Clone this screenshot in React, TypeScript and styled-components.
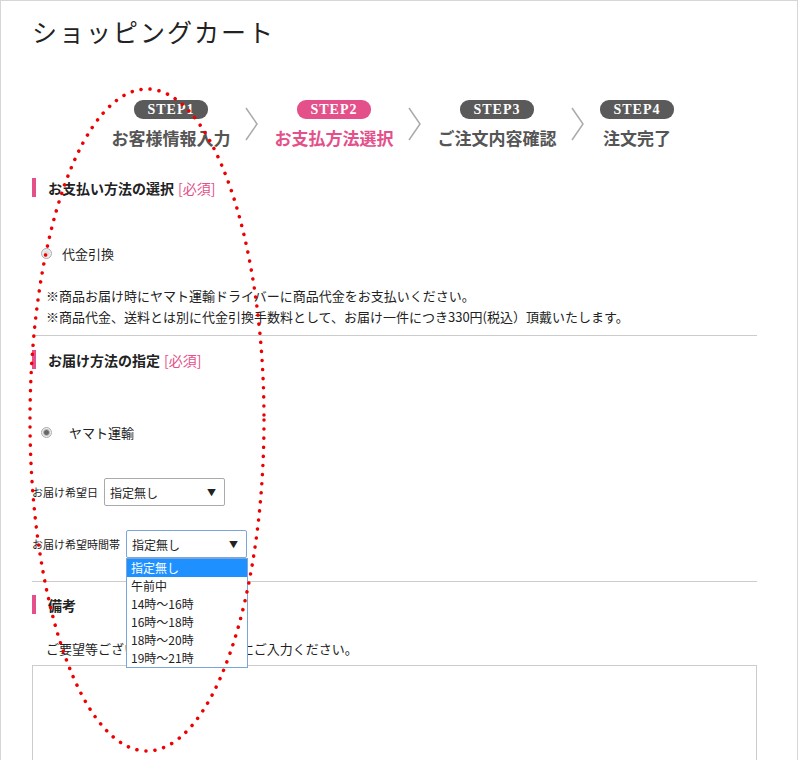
import React from "react";
import styled, { createGlobalStyle } from "styled-components";

const G = createGlobalStyle`
  html, body { margin: 0; padding: 0; background: #fff; }
  body { font-family: "Liberation Serif", "Noto Sans CJK JP", serif; color: #222; }
`;
const Frame = styled.div`
  position: relative; width: 798px; height: 760px; border: 1px solid #d6d6d6; border-bottom: none;
  box-sizing: border-box; overflow: hidden; padding: 0 42px 0 31px;
`;
const Title = styled.h1`
  margin: 17px 0 0; font-weight: 400; font-size: 25px; letter-spacing: 2px; line-height: 32px;
`;
const Steps = styled.div`
  display: flex; align-items: flex-start; margin: 50px 0 0 76px;
`;
const Step = styled.div<{ $w: number }>`
  width: ${p => p.$w}px; display: flex; flex-direction: column; align-items: center; gap: 7px;
`;
const Badge = styled.div<{ $on?: boolean }>`
  background: ${p => (p.$on ? "#e4508a" : "#5a5a5a")}; color: #fff; font-weight: 700; font-size: 14px;
  border-radius: 9px; width: 74px; height: 19px; line-height: 19px; text-align: center; letter-spacing: 1px;
`;
const StepLabel = styled.div<{ $on?: boolean }>`
  font-size: 17px; font-weight: 700; color: ${p => (p.$on ? "#e4508a" : "#555")};
  font-family: "Noto Sans CJK JP", sans-serif; line-height: 24px; white-space: nowrap;
`;
const Chev = styled.svg`width: 37px; height: 40px; margin-top: 4px; flex: none;`;
const Head = styled.div`
  display: flex; align-items: center; gap: 12px; font-weight: 700; font-size: 14px; height: 19px;
  font-family: "Noto Sans CJK JP", sans-serif;
  &::before { content: ""; width: 4px; height: 19px; background: #e4508a; }
`;
const Req = styled.span`color: #e4508a; font-weight: 400; margin-left: -8px;`;
const RadioRow = styled.div<{ $gap: number }>`
  display: flex; align-items: center; gap: ${p => p.$gap}px; margin-left: 9px; font-size: 13px;
  font-family: "Noto Sans CJK JP", sans-serif;
`;
const Radio = styled.span<{ $on?: boolean }>`
  width: 9px; height: 9px; border-radius: 50%; border: 1px solid #aaa;
  background: radial-gradient(circle, ${p => (p.$on ? "#666 30%" : "#ddd 30%")}, #eee 60%);
`;
const Note = styled.p`margin: 0 0 0 14px; font-size: 13px; line-height: 21px; font-family: "Noto Sans CJK JP", sans-serif;`;
const Hr = styled.hr`border: 0; border-top: 1px solid #ccc; margin: 0; width: 725px;`;
const Field = styled.div`display: flex; align-items: center; gap: 6px; font-size: 11px; font-family: "Noto Sans CJK JP", sans-serif;`;
const Select = styled.div<{ $w: number; $focus?: boolean }>`
  position: relative; width: ${p => p.$w}px; height: 28px; box-sizing: border-box; display: flex;
  align-items: center; justify-content: space-between; padding: 0 8px 0 5px; font-size: 12px;
  border: 1px solid ${p => (p.$focus ? "#7aa6da" : "#aaa")}; border-radius: 2px;
  &::after { content: "▼"; font-size: 9px; }
`;
const List = styled.div`
  position: absolute; left: -1px; top: 27px; width: 120px; border: 1px solid #7aa6da; background: #fff; z-index: 2;
`;
const Opt = styled.div<{ $sel?: boolean }>`
  height: 18px; line-height: 18px; padding-left: 4px; font-size: 12px;
  background: ${p => (p.$sel ? "#1e90ff" : "#fff")}; color: ${p => (p.$sel ? "#fff" : "#222")};
`;
const Textarea = styled.div`width: 725px; height: 120px; border: 1px solid #ccc; box-sizing: border-box;`;
const Col = styled.div<{ $mt: number }>`margin-top: ${p => p.$mt}px;`;
const Ellipse = styled.svg`position: absolute; left: 0; top: 0; pointer-events: none; z-index: 3;`;

const steps = ["お客様情報入力", "お支払方法選択", "ご注文内容確認", "注文完了"];
const opts = ["指定無し", "午前中", "14時〜16時", "16時〜18時", "18時〜20時", "19時〜21時"];

export default function App() {
  return (
    <Frame>
      <G />
      <Title>ショッピングカート</Title>
      <Steps>
        {steps.map((s, i) => (
          <React.Fragment key={s}>
            {i > 0 && (
              <Chev viewBox="0 0 37 40"><polyline points="12,4 23,20 12,36" fill="none" stroke="#aaa" strokeWidth="1.5" /></Chev>
            )}
            <Step $w={i === 3 ? 80 : 126}>
              <Badge $on={i === 1}>STEP{i + 1}</Badge>
              <StepLabel $on={i === 1}>{s}</StepLabel>
            </Step>
          </React.Fragment>
        ))}
      </Steps>
      <Col $mt={28}><Head>お支払い方法の選択 <Req>[必須]</Req></Head></Col>
      <Col $mt={47}><RadioRow $gap={10}><Radio />代金引換</RadioRow></Col>
      <Col $mt={22}>
        <Note>※商品お届け時にヤマト運輸ドライバーに商品代金をお支払いください。</Note>
        <Note>※商品代金、送料とは別に代金引換手数料として、お届け一件につき330円(税込）頂戴いたします。</Note>
      </Col>
      <Col $mt={8}><Hr /></Col>
      <Col $mt={14}><Head>お届け方法の指定 <Req>[必須]</Req></Head></Col>
      <Col $mt={54}><RadioRow $gap={17}><Radio $on />ヤマト運輸</RadioRow></Col>
      <Col $mt={36}><Field>お届け希望日<Select $w={121}>指定無し</Select></Field></Col>
      <Col $mt={24}>
        <Field>お届け希望時間帯
          <Select $w={121} $focus>指定無し
            <List>{opts.map((o, i) => <Opt key={o} $sel={i === 0}>{o}</Opt>)}</List>
          </Select>
        </Field>
      </Col>
      <Col $mt={23}><Hr /></Col>
      <Col $mt={13}><Head>備考</Head></Col>
      <Col $mt={24}><Note>ご要望等ございましたら、こちらにご入力ください。</Note></Col>
      <Col $mt={6}><Textarea /></Col>
      <Ellipse width="798" height="760">
        <ellipse cx="146" cy="419" rx="117" ry="331" fill="none" stroke="#e00" strokeWidth="3.5" strokeDasharray="0.1 9" strokeLinecap="round" />
      </Ellipse>
    </Frame>
  );
}
